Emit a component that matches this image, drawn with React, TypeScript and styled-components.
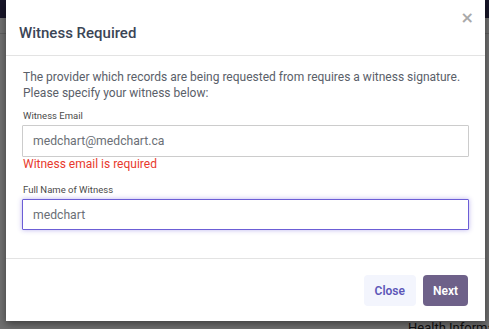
import React from "react";
import styled, { createGlobalStyle } from "styled-components";

const Global = createGlobalStyle`
  html, body { margin: 0; padding: 0; }
  body {
    width: 489px;
    height: 329px;
    overflow: hidden;
    font-family: Roboto, "Liberation Sans", Arial, sans-serif;
    background: #ffffff;
  }
`;

const Page = styled.div`
  position: relative;
  width: 489px;
  height: 329px;
  display: flex;
  flex-direction: column;
`;

const NavBar = styled.div`
  height: 18px;
  background: #38345f;
`;

const SubBar = styled.div`
  height: 15px;
  border-bottom: 1px solid #d8d8d8;
  background: #ffffff;
`;

const Content = styled.div`
  flex: 1;
  display: flex;
  justify-content: flex-end;
  align-items: flex-end;
  overflow: hidden;
`;

const BgText = styled.span`
  font-size: 13px;
  line-height: 13px;
  color: #222;
  margin-bottom: -5px;
  white-space: nowrap;
  width: 81px;
  overflow: hidden;
`;

const Overlay = styled.div`
  position: absolute;
  inset: 0;
  background: rgba(0, 0, 0, 0.56);
  display: flex;
  justify-content: flex-start;
  align-items: flex-start;
  padding-left: 6px;
`;

const Modal = styled.div`
  position: relative;
  width: 479px;
  background: #ffffff;
  box-shadow: 0 3px 8px rgba(0, 0, 0, 0.45);
  display: flex;
  flex-direction: column;
`;

const Header = styled.div`
  height: 56px;
  box-sizing: border-box;
  padding: 25px 13px 0 13px;
  border-bottom: 1px solid #e3e3e3;
`;

const Title = styled.h2`
  margin: 0;
  font-size: 15px;
  line-height: 17px;
  font-weight: 500;
  color: #3b4556;
`;

const CloseX = styled.button`
  position: absolute;
  top: 10px;
  right: 11px;
  border: 0;
  background: none;
  padding: 0;
  font-family: "DejaVu Sans", Arial, sans-serif;
  font-size: 16px;
  font-weight: bold;
  line-height: 16px;
  color: #a9a9a9;
  cursor: pointer;
`;

const Body = styled.div`
  padding: 13px 16px 28px 16px;
  border-bottom: 1px solid #e3e3e3;
  display: flex;
  flex-direction: column;
`;

const Intro = styled.p`
  margin: 0 0 9px 1px;
  font-size: 12px;
  line-height: 16px;
  color: #5a6069;
`;

const Label = styled.label`
  font-size: 9.5px;
  line-height: 12px;
  color: #4a4a4a;
  margin: 0 0 3px 1px;
`;

const Input = styled.input<{ $focused?: boolean }>`
  box-sizing: border-box;
  width: 447px;
  height: ${(p) => (p.$focused ? "31px" : "32px")};
  padding: 0 10px;
  font-family: Roboto, "Liberation Sans", Arial, sans-serif;
  font-size: 12.2px;
  color: #6b6f76;
  background: #fff;
  outline: none;
  border: ${(p) => (p.$focused ? "1.5px solid #6c5ed6" : "1px solid #cccccc")};
  box-shadow: ${(p) => (p.$focused ? "0 0 5px rgba(108, 94, 214, 0.45)" : "none")};
  border-radius: 1px;
`;

const Error = styled.div`
  font-size: 12px;
  line-height: 14px;
  color: #e8392c;
  margin: 0 0 13px 1px;
`;

const Footer = styled.div`
  display: flex;
  justify-content: flex-end;
  gap: 7px;
  padding: 16px 17px 15px 0;
`;

const Button = styled.button<{ $primary?: boolean }>`
  height: 31px;
  padding: 0 ${(p) => (p.$primary ? "10px" : "11px")};
  border: 0;
  border-radius: 4px;
  font-family: Roboto, "Liberation Sans", Arial, sans-serif;
  font-size: 12px;
  font-weight: 600;
  cursor: pointer;
  background: ${(p) => (p.$primary ? "#6e6189" : "#f3f5fd")};
  color: ${(p) => (p.$primary ? "#ffffff" : "#5d57b8")};
`;

export default function App() {
  return (
    <>
      <Global />
      <Page>
        <NavBar />
        <SubBar />
        <Content>
          <BgText>Health Information</BgText>
        </Content>
        <Overlay>
          <Modal>
            <Header>
              <Title>Witness Required</Title>
            </Header>
            <CloseX aria-label="Close">×</CloseX>
            <Body>
              <Intro>
                The provider which records are being requested from requires a witness signature.
                <br />
                Please specify your witness below:
              </Intro>
              <Label>Witness Email</Label>
              <Input defaultValue="medchart@medchart.ca" />
              <Error>Witness email is required</Error>
              <Label>Full Name of Witness</Label>
              <Input $focused defaultValue="medchart" />
            </Body>
            <Footer>
              <Button>Close</Button>
              <Button $primary>Next</Button>
            </Footer>
          </Modal>
        </Overlay>
      </Page>
    </>
  );
}
